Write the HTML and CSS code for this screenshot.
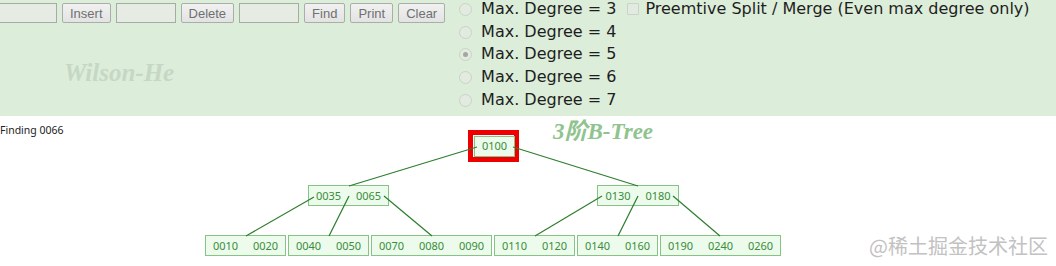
FILE: index.html
```html
<!DOCTYPE html>
<html lang="en">
<head>
  <meta charset="UTF-8" />
  <title>B-Tree Visualization</title>
  <link rel="stylesheet" href="styles.css">
</head>
<body>
  <header class="panel">
    <div class="controls">
      <div class="toolbar">
        <input type="text" class="field" />
        <button class="btn">Insert</button>
        <input type="text" class="field" />
        <button class="btn">Delete</button>
        <input type="text" class="field" />
        <button class="btn">Find</button>
        <button class="btn">Print</button>
        <button class="btn">Clear</button>
      </div>
      <div class="signature">Wilson-He</div>
    </div>

    <ul class="degrees">
      <li><label><input type="radio" name="deg" class="radio" /> Max. Degree = 3</label></li>
      <li><label><input type="radio" name="deg" class="radio" /> Max. Degree = 4</label></li>
      <li><label><input type="radio" name="deg" class="radio" checked /> Max. Degree = 5</label></li>
      <li><label><input type="radio" name="deg" class="radio" /> Max. Degree = 6</label></li>
      <li><label><input type="radio" name="deg" class="radio" /> Max. Degree = 7</label></li>
    </ul>

    <label class="preempt"><input type="checkbox" class="check" /> Preemtive Split / Merge (Even max degree only)</label>
  </header>

  <main class="stage">
    <svg class="tree" width="1056" height="150" viewBox="0 116 1056 150">
      <text x="0" y="134" class="status">Finding 0066</text>
      <text x="553" y="139" class="title">3阶B-Tree</text>

      <!-- root -->
      <rect x="470.5" y="132.5" width="46" height="27" class="found" />
      <rect x="474.5" y="136.5" width="40" height="20" class="node" />
      <text x="494.5" y="150" class="key">0100</text>

      <!-- level 2 -->
      <rect x="308.5" y="185.5" width="80" height="20" class="node" />
      <text x="328.5" y="200" class="key">0035</text>
      <text x="368.5" y="200" class="key">0065</text>

      <rect x="597.5" y="185.5" width="81" height="20" class="node" />
      <text x="618" y="200" class="key">0130</text>
      <text x="658" y="200" class="key">0180</text>

      <!-- leaves -->
      <rect x="205.5" y="235.5" width="80" height="20" class="node" />
      <text x="225.5" y="250" class="key">0010</text>
      <text x="265.5" y="250" class="key">0020</text>

      <rect x="288.5" y="235.5" width="80" height="20" class="node" />
      <text x="308.5" y="250" class="key">0040</text>
      <text x="348.5" y="250" class="key">0050</text>

      <rect x="371.5" y="235.5" width="120" height="20" class="node" />
      <text x="391.5" y="250" class="key">0070</text>
      <text x="431.5" y="250" class="key">0080</text>
      <text x="471.5" y="250" class="key">0090</text>

      <rect x="494.5" y="235.5" width="80" height="20" class="node" />
      <text x="514.5" y="250" class="key">0110</text>
      <text x="554.5" y="250" class="key">0120</text>

      <rect x="577.5" y="235.5" width="80" height="20" class="node" />
      <text x="597.5" y="250" class="key">0140</text>
      <text x="637.5" y="250" class="key">0160</text>

      <rect x="660.5" y="235.5" width="120" height="20" class="node" />
      <text x="680.5" y="250" class="key">0190</text>
      <text x="720.5" y="250" class="key">0240</text>
      <text x="760.5" y="250" class="key">0260</text>

      <!-- edges -->
      <line x1="477" y1="147" x2="349" y2="186" class="edge" />
      <line x1="513" y1="147" x2="638" y2="186" class="edge" />
      <line x1="314" y1="197" x2="246" y2="236" class="edge" />
      <line x1="349" y1="196" x2="329" y2="236" class="edge" />
      <line x1="384" y1="196" x2="432" y2="236" class="edge" />
      <line x1="602" y1="196" x2="535" y2="236" class="edge" />
      <line x1="638" y1="196" x2="618" y2="236" class="edge" />
      <line x1="673" y1="196" x2="720" y2="236" class="edge" />
    </svg>
    <div class="watermark">@稀土掘金技术社区</div>
  </main>
</body>
</html>
```

FILE: styles.css
```css
body {
  margin: 0;
  padding: 0;
  font-family: "DejaVu Sans", Verdana, sans-serif;
  background: white;
  overflow: hidden;
}

.panel {
  display: flex;
  align-items: flex-start;
  height: 116px;
  background-color: #dcedda;
  overflow: hidden;
}

.controls {
  width: 458px;
  margin-left: -3px;
  flex-shrink: 0;
}

.toolbar {
  display: flex;
  gap: 5px;
  padding-top: 3px;
}

.field {
  width: 60px;
  height: 20px;
  box-sizing: border-box;
  background-color: #e6ebe3;
  border: 1px solid #a4aca3;
  margin: 0;
  padding: 0;
}

.btn {
  height: 20px;
  padding: 0 7px;
  margin: 0;
  font-family: "Liberation Sans", Arial, sans-serif;
  font-size: 13px;
  color: #707070;
  background: linear-gradient(#f1f1f1, #e3e3e3);
  border: 1px solid #a9aea9;
  border-radius: 2px;
}

.signature {
  margin: 38px 0 0 67px;
  font-family: "Liberation Serif", "Times New Roman", serif;
  font-size: 25px;
  line-height: 24px;
  font-weight: bold;
  font-style: italic;
  color: #c6d8c4;
}

.degrees {
  list-style: none;
  margin: -2px 0 0 0;
  padding: 0;
  font-size: 16px;
  line-height: 22.7px;
  color: #1e1e1e;
  flex-shrink: 0;
}

.degrees label {
  display: flex;
  align-items: center;
  gap: 4px;
  white-space: pre;
}

.radio {
  appearance: none;
  width: 13px;
  height: 13px;
  margin: 0 0 0 4px;
  border: 1px solid #c9d3c8;
  border-radius: 50%;
  background-color: #e3ebe1;
  box-sizing: border-box;
  position: relative;
}

.radio:checked::after {
  content: "";
  position: absolute;
  left: 3px;
  top: 3px;
  width: 5px;
  height: 5px;
  border-radius: 50%;
  background-color: #a0a8a0;
}

.preempt {
  display: flex;
  align-items: center;
  gap: 1px;
  margin: -2px 0 0 11px;
  font-size: 16px;
  line-height: 22.7px;
  color: #1e1e1e;
  white-space: pre;
}

.check {
  appearance: none;
  width: 12px;
  height: 12px;
  margin: 0;
  border: 1px solid #c9d3c8;
  border-radius: 1px;
  background-color: #e3ebe1;
}

.stage {
  position: relative;
  height: 150px;
}

.tree {
  display: block;
}

.status {
  font-family: "Noto Sans", "Open Sans", sans-serif;
  font-size: 10.5px;
  fill: #222;
}

.title {
  font-family: "Liberation Serif", "Noto Sans CJK SC", serif;
  font-size: 23px;
  font-weight: bold;
  font-style: italic;
  fill: #8fc48f;
}

.node {
  fill: #ecfbec;
  stroke: #86c486;
  stroke-width: 1;
}

.found {
  fill: none;
  stroke: #ee0000;
  stroke-width: 5;
}

.key {
  font-family: "Noto Sans", "Open Sans", sans-serif;
  font-size: 11px;
  fill: #3a8d3a;
  text-anchor: middle;
}

.edge {
  stroke: #2e7d2e;
  stroke-width: 1.2;
}

.watermark {
  position: absolute;
  right: 8px;
  bottom: 6px;
  font-family: "Noto Sans CJK SC", sans-serif;
  font-size: 20px;
  color: #c2c2c2;
}
```
